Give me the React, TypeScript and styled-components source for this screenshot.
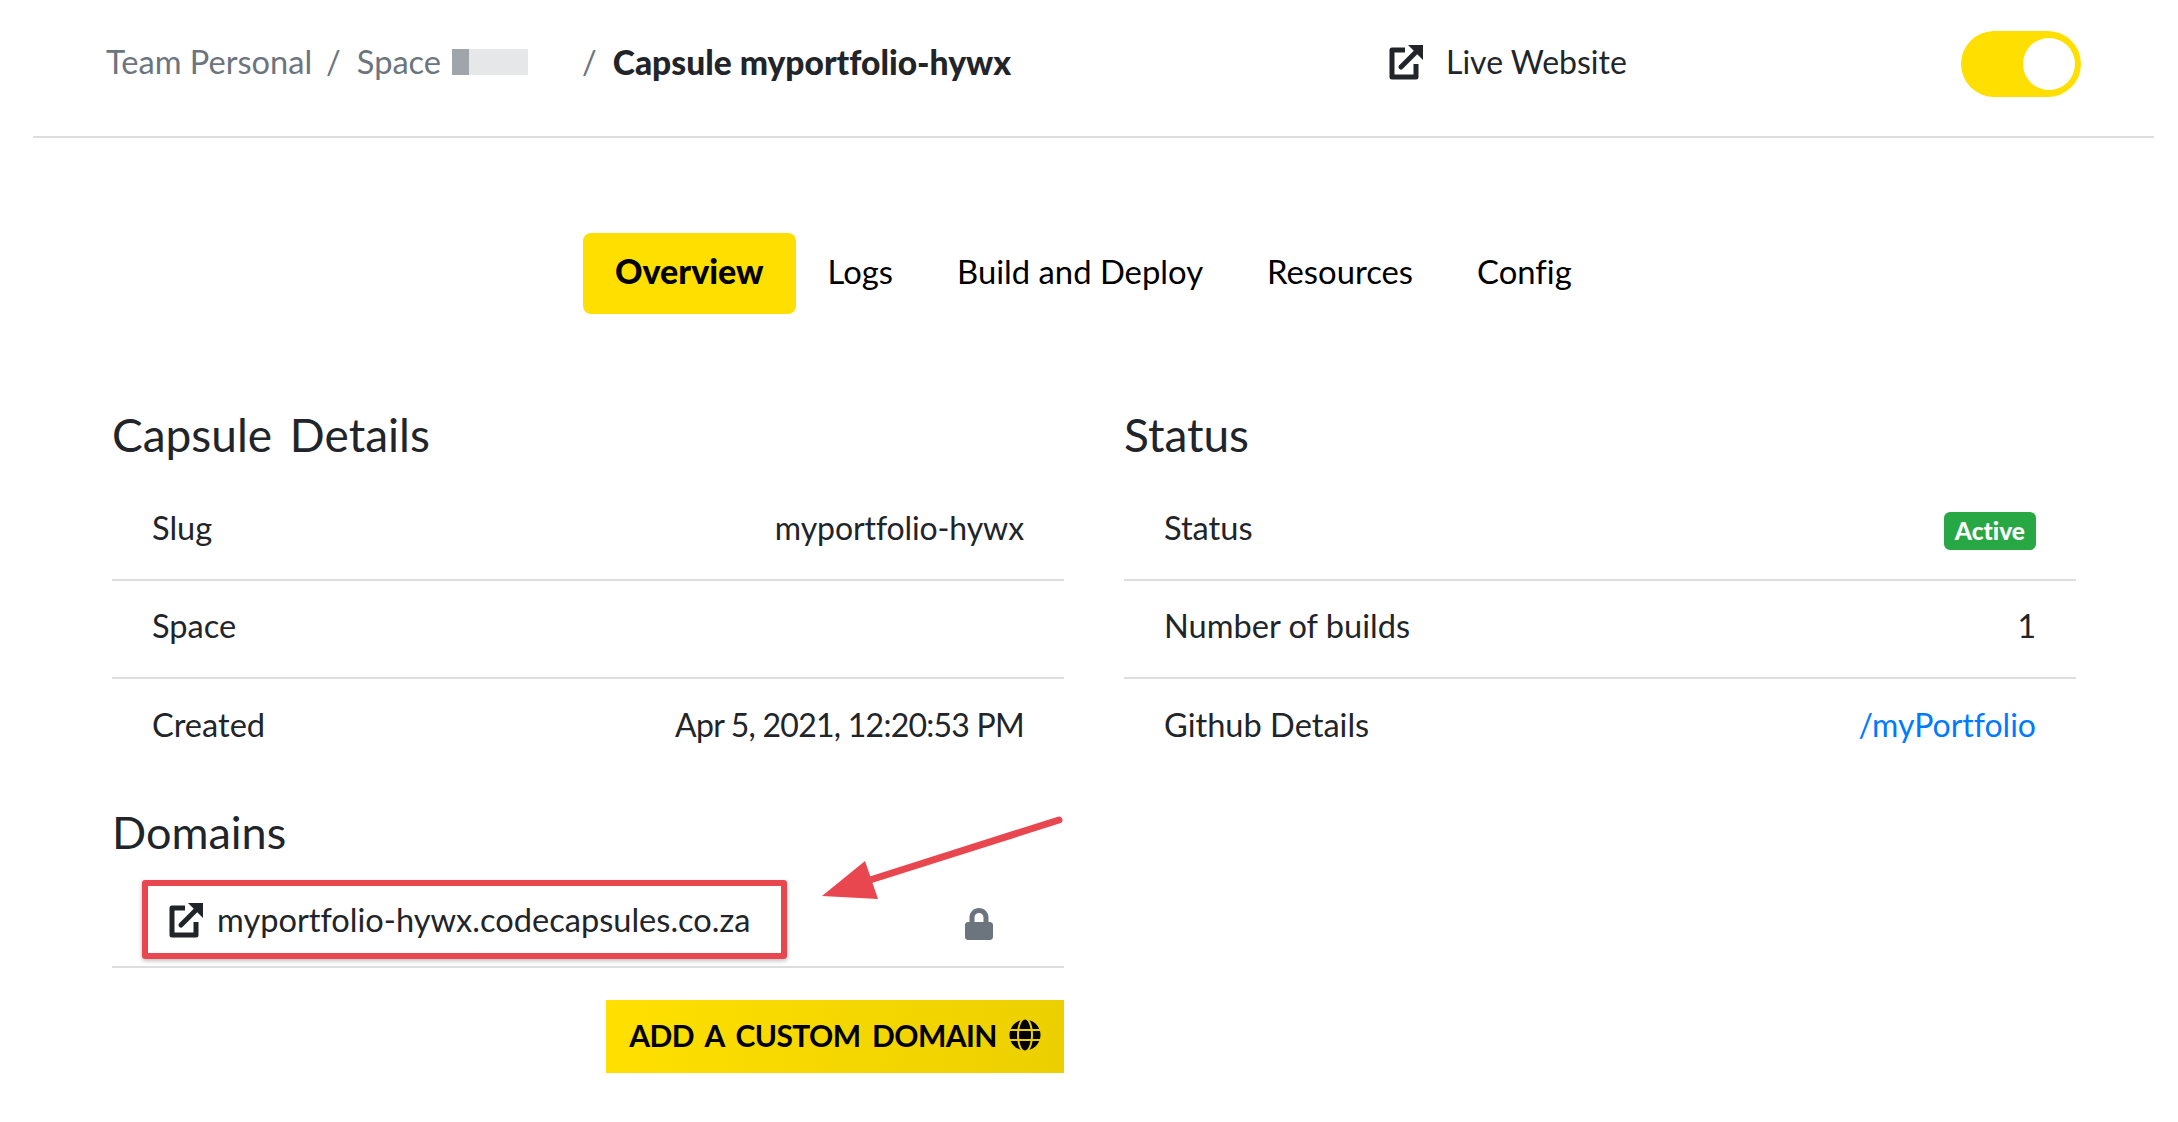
import styled, { createGlobalStyle } from "styled-components";
import { FaGlobe, FaLock } from "react-icons/fa";

const GlobalStyle = createGlobalStyle`
  html, body {
    margin: 0;
    padding: 0;
    background: #fff;
    font-family: Lato, "Open Sans", sans-serif;
    font-variant-ligatures: none;
    color: #212529;
  }
`;

const Page = styled.div`
  position: relative;
  width: 2178px;
  height: 1122px;
  overflow: hidden;
  padding: 0 24px 0 33px;
  box-sizing: border-box;
`;

const Header = styled.header`
  display: flex;
  align-items: center;
  height: 138px;
  padding: 0 73px 9px 73px;
  box-sizing: border-box;
  border-bottom: 2px solid #dedede;
  font-size: 32px;
`;

const Crumbs = styled.nav`
  display: flex;
  align-items: center;
  width: 1280px;
  margin-bottom: 4px;
  color: #6c757d;
  font-size: 32.6px;
`;

const Slash = styled.span`
  margin: 0 16px 0 14px;
`;

const Redacted = styled.span`
  display: block;
  width: 76px;
  height: 26px;
  margin: 0 40px 0 11px;
  background: linear-gradient(to right, #a0a4ab 17px, #e6e7e9 17px);
`;

const Current = styled.strong`
  color: #212529;
  font-size: 33.6px;
  font-weight: 900;
`;

const LiveLink = styled.a`
  display: flex;
  align-items: center;
  gap: 22px;
  margin-bottom: 4px;
  padding-left: 2px;
  color: #212529;
`;

const Toggle = styled.div`
  display: flex;
  justify-content: flex-end;
  align-items: center;
  width: 120px;
  height: 66px;
  margin-left: auto;
  padding: 0 6px;
  box-sizing: border-box;
  border-radius: 33px;
  background: #ffdf00;
`;

const Knob = styled.span`
  width: 52px;
  height: 52px;
  border-radius: 50%;
  background: #fff;
`;

const Tabs = styled.nav`
  display: flex;
  align-items: center;
  margin: 95px 0 0 550px;
  font-size: 32.8px;
`;

const Tab = styled.a<{ $active?: boolean }>`
  color: #000;
  padding: 0 32px 5px;
  font-weight: ${(p) => (p.$active ? 900 : 400)};
  ${(p) =>
    p.$active &&
    `
    background: #ffdf00;
    border-radius: 8px;
    font-size: 34px;
    padding: 17px 32px 23px;
    line-height: 41px;
  `}
`;

const Columns = styled.div`
  display: grid;
  grid-template-columns: 952px 952px;
  column-gap: 60px;
  margin: 91px 0 0 79px;
`;

const Title = styled.h2`
  margin: 0;
  font-size: 46px;
  line-height: 60px;
  font-weight: 400;
  word-spacing: 6px;
  color: #212529;
`;

const Rows = styled.div`
  margin-top: 18px;
`;

const Row = styled.div<{ $last?: boolean }>`
  display: flex;
  justify-content: space-between;
  align-items: center;
  height: 98px;
  padding: 0 40px 7px;
  box-sizing: border-box;
  font-size: 32.6px;
  border-bottom: ${(p) => (p.$last ? "none" : "2px solid #dedede")};
`;

const Value = styled.span<{ $tight?: boolean }>`
  font-size: 32px;
  letter-spacing: ${(p) => (p.$tight ? "-0.75px" : "-0.1px")};
`;

const Badge = styled.span`
  margin-top: 6px;
  background: #28a745;
  color: #fff;
  font-size: 24.5px;
  font-weight: 900;
  line-height: 38px;
  padding: 0 11px;
  border-radius: 6px;
`;

const RepoLink = styled.a`
  color: #007bff;
  font-size: 32px;
`;

const DomainsTitle = styled(Title)`
  margin-top: 25px;
  font-size: 45px;
`;

const DomainRow = styled.div`
  display: flex;
  align-items: flex-start;
  justify-content: space-between;
  height: 88px;
  margin-top: 18px;
  padding: 0 70px 0 30px;
  box-sizing: border-box;
  border-bottom: 2px solid #dedede;
`;

const DomainLink = styled.a`
  display: flex;
  align-items: center;
  gap: 13px;
  width: 645px;
  height: 79px;
  padding-left: 20px;
  box-sizing: border-box;
  border: 6px solid #e8474f;
  border-radius: 3px;
  box-shadow: 0 2px 4px rgba(0, 0, 0, 0.25);
  font-size: 32.6px;
  color: #212529;
`;

const LockIcon = styled(FaLock)`
  width: 30px;
  height: 32px;
  margin-top: 28px;
  color: #6c757d;
`;

const Actions = styled.div`
  display: flex;
  justify-content: flex-end;
  margin-top: 32px;
`;

const CustomButton = styled.button`
  display: flex;
  align-items: center;
  justify-content: center;
  gap: 12px;
  width: 458px;
  height: 73px;
  border: none;
  padding: 0 0 3px;
  background: linear-gradient(100deg, #ffe000, #eccf00);
  font-family: inherit;
  font-size: 30px;
  font-weight: 700;
  letter-spacing: -0.6px;
  word-spacing: 5px;
  color: #000;
`;

const Arrow = styled.svg`
  position: absolute;
  left: 810px;
  top: 805px;
  width: 260px;
  height: 105px;
`;

const LinkIcon = () => (
  <svg width="36" height="36" viewBox="0 0 36 36" fill="none" stroke="#212529" strokeWidth="5" strokeLinejoin="round">
    <path d="M17 6H4v27h24V20" />
    <path d="M13 23 30 6" strokeLinecap="round" />
    <path d="M20 1h15v15z" fill="#212529" stroke="none" />
  </svg>
);

export default function App() {
  return (
    <Page>
      <GlobalStyle />
      <Header>
        <Crumbs>
          <span>Team Personal</span>
          <Slash>/</Slash>
          <span>Space</span>
          <Redacted />
          <Slash>/</Slash>
          <Current>Capsule myportfolio-hywx</Current>
        </Crumbs>
        <LiveLink>
          <LinkIcon />
          Live Website
        </LiveLink>
        <Toggle>
          <Knob />
        </Toggle>
      </Header>

      <Tabs>
        <Tab $active>Overview</Tab>
        <Tab>Logs</Tab>
        <Tab>Build and Deploy</Tab>
        <Tab>Resources</Tab>
        <Tab>Config</Tab>
      </Tabs>

      <Columns>
        <section>
          <Title>Capsule Details</Title>
          <Rows>
            <Row>
              <span>Slug</span>
              <Value>myportfolio-hywx</Value>
            </Row>
            <Row>
              <span>Space</span>
            </Row>
            <Row $last>
              <span>Created</span>
              <Value $tight>Apr 5, 2021, 12:20:53 PM</Value>
            </Row>
          </Rows>
          <DomainsTitle>Domains</DomainsTitle>
          <DomainRow>
            <DomainLink>
              <LinkIcon />
              myportfolio-hywx.codecapsules.co.za
            </DomainLink>
            <LockIcon />
          </DomainRow>
          <Actions>
            <CustomButton>
              ADD A CUSTOM DOMAIN <FaGlobe size={32} />
            </CustomButton>
          </Actions>
        </section>
        <section>
          <Title>Status</Title>
          <Rows>
            <Row>
              <span>Status</span>
              <Badge>Active</Badge>
            </Row>
            <Row>
              <span>Number of builds</span>
              <Value>1</Value>
            </Row>
            <Row $last>
              <span>Github Details</span>
              <RepoLink>/myPortfolio</RepoLink>
            </Row>
          </Rows>
        </section>
      </Columns>

      <Arrow viewBox="0 0 260 105">
        <path d="M249 15 60 75" stroke="#e8474f" strokeWidth="7" strokeLinecap="round" fill="none" />
        <path d="M12 91 55 56 68 94z" fill="#e8474f" />
      </Arrow>
    </Page>
  );
}
